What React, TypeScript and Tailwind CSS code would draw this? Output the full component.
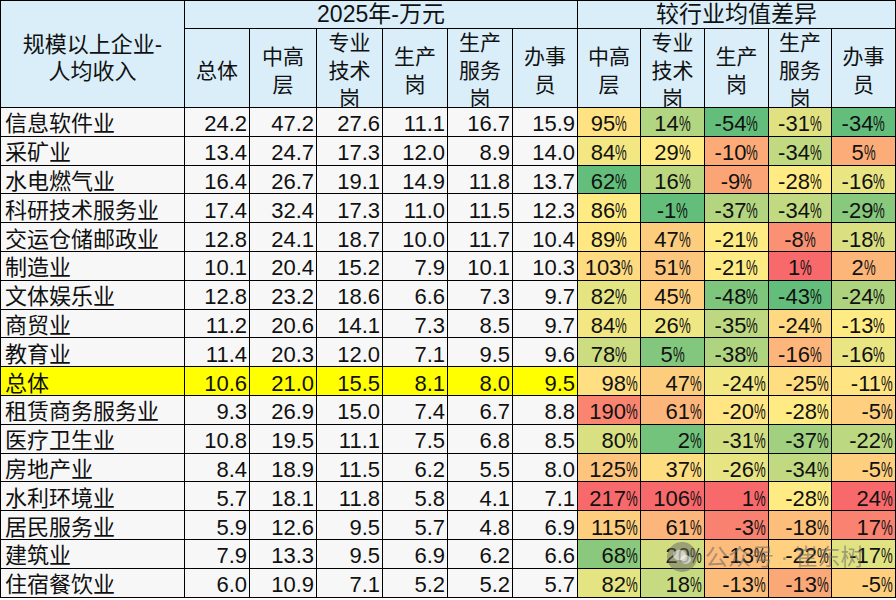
import React from "react";

type Row = [string, number[], number[]];

const rows: Row[] = [
  ["信息软件业", [24.2, 47.2, 27.6, 11.1, 16.7, 15.9], [95, 14, -54, -31, -34]],
  ["采矿业", [13.4, 24.7, 17.3, 12.0, 8.9, 14.0], [84, 29, -10, -34, 5]],
  ["水电燃气业", [16.4, 26.7, 19.1, 14.9, 11.8, 13.7], [62, 16, -9, -28, -16]],
  ["科研技术服务业", [17.4, 32.4, 17.3, 11.0, 11.5, 12.3], [86, -1, -37, -34, -29]],
  ["交运仓储邮政业", [12.8, 24.1, 18.7, 10.0, 11.7, 10.4], [89, 47, -21, -8, -18]],
  ["制造业", [10.1, 20.4, 15.2, 7.9, 10.1, 10.3], [103, 51, -21, 1, 2]],
  ["文体娱乐业", [12.8, 23.2, 18.6, 6.6, 7.3, 9.7], [82, 45, -48, -43, -24]],
  ["商贸业", [11.2, 20.6, 14.1, 7.3, 8.5, 9.7], [84, 26, -35, -24, -13]],
  ["教育业", [11.4, 20.3, 12.0, 7.1, 9.5, 9.6], [78, 5, -38, -16, -16]],
  ["总体", [10.6, 21.0, 15.5, 8.1, 8.0, 9.5], [98, 47, -24, -25, -11]],
  ["租赁商务服务业", [9.3, 26.9, 15.0, 7.4, 6.7, 8.8], [190, 61, -20, -28, -5]],
  ["医疗卫生业", [10.8, 19.5, 11.1, 7.5, 6.8, 8.5], [80, 2, -31, -37, -22]],
  ["房地产业", [8.4, 18.9, 11.5, 6.2, 5.5, 8.0], [125, 37, -26, -34, -5]],
  ["水利环境业", [5.7, 18.1, 11.8, 5.8, 4.1, 7.1], [217, 106, 1, -28, 24]],
  ["居民服务业", [5.9, 12.6, 9.5, 5.7, 4.8, 6.9], [115, 61, -3, -18, 17]],
  ["建筑业", [7.9, 13.3, 9.5, 6.9, 6.2, 6.6], [68, 20, -13, -22, -17]],
  ["住宿餐饮业", [6.0, 10.9, 7.1, 5.2, 5.2, 5.7], [82, 18, -13, -13, -5]],
];

const GREEN = [99, 190, 123];
const YELLOW = [255, 235, 132];
const RED = [248, 105, 107];

function mix(a: number[], b: number[], t: number) {
  const c = a.map((v, i) => Math.round(v + (b[i] - v) * t));
  return `rgb(${c[0]},${c[1]},${c[2]})`;
}

const stats = [0, 1, 2, 3, 4].map((ci) => {
  const vals = rows.map((r) => r[2][ci]).sort((a, b) => a - b);
  return { min: vals[0], max: vals[vals.length - 1], med: vals[Math.floor(vals.length / 2)] };
});

function heat(ci: number, v: number) {
  const s = stats[ci];
  if (v <= s.med) {
    const t = s.med === s.min ? 1 : (v - s.min) / (s.med - s.min);
    return mix(GREEN, YELLOW, t);
  }
  const t = (v - s.med) / (s.max - s.med);
  return mix(YELLOW, RED, t);
}

const subHeads = [
  "总体",
  "中高\n层",
  "专业\n技术\n岗",
  "生产\n岗",
  "生产\n服务\n岗",
  "办事\n员",
  "中高\n层",
  "专业\n技术\n岗",
  "生产\n岗",
  "生产\n服务\n岗",
  "办事\n员",
];

const font = { fontFamily: '"Liberation Sans", "Noto Sans CJK SC", sans-serif' };

export default function App() {
  return (
    <div className="relative w-[896px] h-[600px] bg-white overflow-hidden text-[#111]" style={font}>
      <div className="grid grid-cols-[184px_65px_67px_66px_65px_65px_65px_63px_64px_64px_63px_64px] grid-rows-[28px_79px_repeat(17,28.8px)] border-l border-t border-black">
        <div className="row-span-2 bg-[#d9eef9] border-r border-b border-black flex items-center justify-center text-center text-[22px] leading-[27px] pt-[7px] whitespace-pre">
          {"规模以上企业-\n人均收入"}
        </div>
        <div className="col-span-6 bg-[#d9eef9] border-r border-b border-black flex items-center justify-center text-[23px] leading-none">
          2025年-万元
        </div>
        <div className="col-span-5 bg-[#d9eef9] border-r border-b border-black flex items-center justify-center text-[23px] leading-none">
          较行业均值差异
        </div>
        {subHeads.map((h, i) => (
          <div
            key={"h" + i}
            className="bg-[#d9eef9] border-r border-b border-black flex items-center justify-center text-center text-[21px] leading-[28px] pt-[6px] whitespace-pre overflow-hidden"
          >
            {h}
          </div>
        ))}
        {rows.map(([name, nums, pcts], ri) => {
          const total = name === "总体";
          const rowBg = total ? "bg-[#ffff00]" : "bg-[#f7f7f7]";
          return (
            <React.Fragment key={name}>
              <div className={`${rowBg} border-r border-b border-black flex items-center pl-[4px] pt-[5px] text-[22px] leading-none whitespace-nowrap`}>
                {name}
              </div>
              {nums.map((n, ni) => (
                <div
                  key={"n" + ni}
                  className={`${rowBg} border-r border-b border-black flex items-center justify-end pr-[2px] pt-[5px] text-[22px] leading-none`}
                >
                  {n.toFixed(1)}
                </div>
              ))}
              {pcts.map((p, pi) => (
                <div
                  key={"p" + pi}
                  className={`border-r border-b border-black flex items-center ${ri >= 9 ? "justify-end pr-[2px]" : "justify-center"} pt-[5px] text-[22px] leading-none whitespace-nowrap`}
                  style={{ backgroundColor: heat(pi, p) }}
                >
                  <span>{p}</span>
                  <span className="inline-block w-[12px] overflow-visible">
                    <span className="inline-block origin-left scale-x-[0.6]">%</span>
                  </span>
                </div>
              ))}
            </React.Fragment>
          );
        })}
      </div>
      <div className="absolute left-[667px] top-[540px] flex items-center gap-[8px] text-[23px] text-[rgba(100,100,100,0.55)] pointer-events-none whitespace-nowrap">
        <svg width="30" height="30" viewBox="0 0 30 30">
          <circle cx="15" cy="15" r="15" fill="rgba(100,100,100,0.5)" />
          <ellipse cx="12.5" cy="13" rx="6.5" ry="5.2" fill="rgba(255,255,255,0.55)" />
          <ellipse cx="18.5" cy="17.5" rx="5.5" ry="4.4" fill="rgba(255,255,255,0.55)" />
        </svg>
        <span>公众号 · 崔东树</span>
      </div>
    </div>
  );
}
